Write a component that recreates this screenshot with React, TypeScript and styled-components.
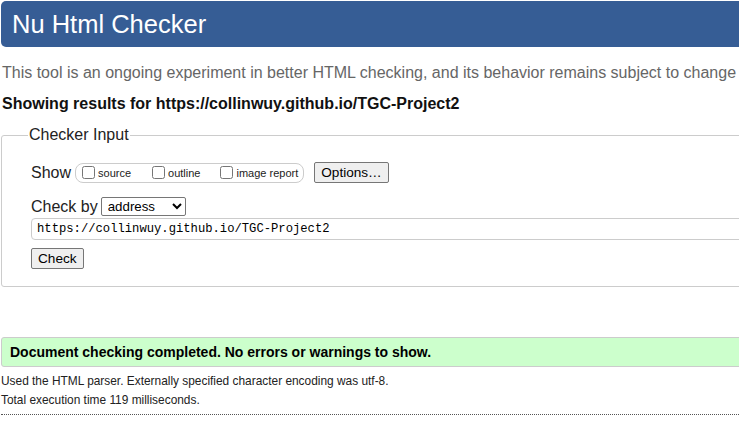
import React from "react";
import styled, { createGlobalStyle } from "styled-components";

const Global = createGlobalStyle`
  html, body { margin: 0; padding: 0; background: #fff; }
  body { font-family: "Liberation Sans", Arial, sans-serif; color: #000; }
`;

const Viewport = styled.div`
  width: 100%;
  overflow: hidden;
`;

const Page = styled.div`
  width: 900px;
  padding: 1px 0 0 1px;
`;

const Header = styled.h1`
  margin: 0;
  height: 46px;
  background: #365d95;
  border-radius: 5px;
  color: #fff;
  font-weight: normal;
  font-size: 25.5px;
  line-height: 46px;
  padding-left: 11px;
`;

const Intro = styled.p`
  margin: 16px 0 0 1px;
  color: #666;
  font-size: 16px;
  line-height: 20px;
`;

const Results = styled.p`
  margin: 11px 0 0 1px;
  font-weight: bold;
  font-size: 16px;
  line-height: 20px;
  color: #111;
`;

const Fieldset = styled.fieldset`
  margin: 12px 0 0 0;
  border: 1px solid #ccc;
  border-radius: 3px;
  padding: 18px 29px 17px 29px;
  min-height: 0;
`;

const Legend = styled.legend`
  font-size: 16px;
  padding: 0 1px;
  margin-left: -3px;
  color: #222;
`;

const Row = styled.div<{ $mt?: number }>`
  display: flex;
  align-items: center;
  gap: 3px;
  margin-top: ${(p) => p.$mt ?? 0}px;
`;

const Label = styled.span`
  font-size: 16px;
  color: #222;
`;

const CheckGroup = styled.div`
  display: flex;
  align-items: center;
  height: 18px;
  border: 1px solid #ccc;
  border-radius: 8px;
  padding: 0 5px 0 3px;
  margin-left: 1px;
`;

const CheckItem = styled.label<{ $mr?: number }>`
  display: flex;
  align-items: center;
  font-size: 11px;
  color: #222;
  margin-right: ${(p) => p.$mr ?? 0}px;
  input { margin: 0 3px 0 3px; width: 13px; height: 13px; }
`;

const Button = styled.button<{ $ml?: number }>`
  font-family: "Liberation Sans", Arial, sans-serif;
  font-size: 13.6px;
  background: #efefef;
  border: 1px solid #767676;
  border-radius: 2px;
  padding: 1px 6px;
  height: 21px;
  color: #000;
  margin-left: ${(p) => p.$ml ?? 0}px;
`;

const Select = styled.select`
  font-family: "Liberation Sans", Arial, sans-serif;
  font-size: 13.3px;
  width: 85px;
  height: 19px;
  border: 1px solid #767676;
  border-radius: 2px;
  background: #fff;
  color: #000;
  padding: 0 0 0 2px;
`;

const UrlInput = styled.input`
  display: block;
  box-sizing: border-box;
  width: 800px;
  height: 22px;
  margin-top: 2px;
  border: 1px solid #ccc;
  border-radius: 4px;
  font-family: "Liberation Mono", monospace;
  font-size: 12.2px;
  padding: 0 5px;
  color: #000;
`;

const Success = styled.div`
  margin-top: 50px;
  background: #ccffcc;
  border: 1px solid #ccc;
  border-radius: 3px 0 0 3px;
  height: 28px;
  line-height: 28px;
  padding-left: 8px;
  font-weight: bold;
  font-size: 14px;
  color: #000;
`;

const Note = styled.p<{ $mt?: number }>`
  margin: ${(p) => p.$mt ?? 0}px 0 0 0;
  font-size: 11.9px;
  line-height: 14px;
  color: #222;
`;

const Rule = styled.hr`
  margin: 7px 0 0 0;
  border: none;
  border-top: 1px dotted #555;
`;

export default function App() {
  return (
    <Viewport>
      <Global />
      <Page>
        <Header>Nu Html Checker</Header>
        <Intro>This tool is an ongoing experiment in better HTML checking, and its behavior remains subject to change</Intro>
        <Results>Showing results for https://collinwuy.github.io/TGC-Project2</Results>
        <Fieldset>
          <Legend>Checker Input</Legend>
          <Row>
            <Label>Show</Label>
            <CheckGroup>
              <CheckItem $mr={18}><input type="checkbox" />source</CheckItem>
              <CheckItem $mr={17}><input type="checkbox" />outline</CheckItem>
              <CheckItem><input type="checkbox" />image report</CheckItem>
            </CheckGroup>
            <Button $ml={7}>Options…</Button>
          </Row>
          <Row $mt={14}>
            <Label>Check by</Label>
            <Select defaultValue="address">
              <option value="address">address</option>
            </Select>
          </Row>
          <UrlInput type="url" defaultValue="https://collinwuy.github.io/TGC-Project2" />
          <Row $mt={8}>
            <Button>Check</Button>
          </Row>
        </Fieldset>
        <Success>Document checking completed. No errors or warnings to show.</Success>
        <Note $mt={7}>Used the HTML parser. Externally specified character encoding was utf-8.</Note>
        <Note $mt={5}>Total execution time 119 milliseconds.</Note>
        <Rule />
      </Page>
    </Viewport>
  );
}
